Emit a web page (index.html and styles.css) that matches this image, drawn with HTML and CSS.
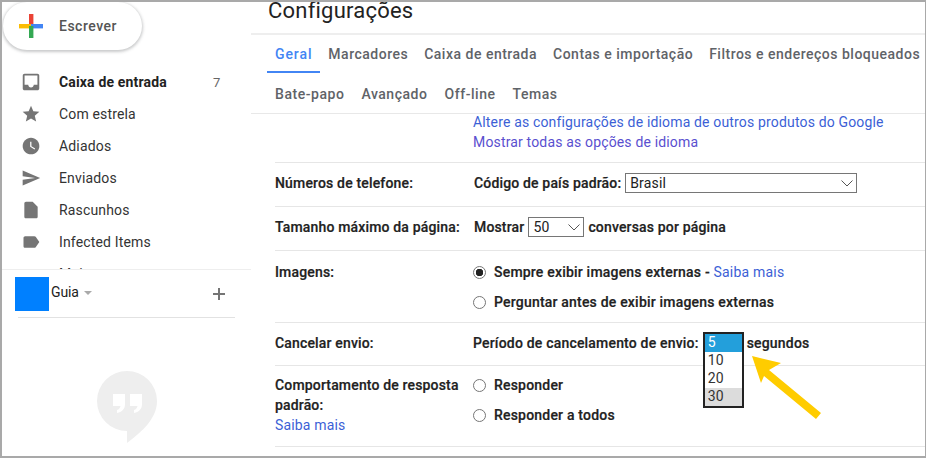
FILE: index.html
```html
<!DOCTYPE html>
<html lang="pt-BR">
<head>
<meta charset="utf-8">
<title>Configurações</title>
<link rel="stylesheet" href="styles.css">
</head>
<body>
<div class="window">
  <aside class="sidebar">
    <button class="compose">
      <svg class="compose-plus" width="24" height="24" viewBox="0 0 24 24">
        <rect x="10" y="0" width="4.4" height="12" fill="#ea4335"/>
        <rect x="12" y="10" width="12" height="4.4" fill="#4285f4"/>
        <rect x="0" y="10" width="12" height="4.4" fill="#fbbc04"/>
        <rect x="10" y="12" width="4.4" height="12" fill="#34a853"/>
      </svg>
      <span>Escrever</span>
    </button>
    <nav class="nav">
      <a class="nav-item active"><svg class="icon icon-inbox" viewBox="0 0 24 24"><path d="M19 3H4.99c-1.1 0-1.98.9-1.98 2L3 19c0 1.1.89 2 1.99 2H19c1.1 0 2-.9 2-2V5c0-1.1-.9-2-2-2zm0 12h-4c0 1.66-1.35 3-3 3s-3-1.34-3-3H4.99V5H19v10z"/></svg><span class="nav-label">Caixa de entrada</span><span class="count">7</span></a>
      <a class="nav-item"><svg class="icon" viewBox="0 0 24 24"><path d="M12 17.27L18.18 21l-1.64-7.03L22 9.24l-7.19-.61L12 2 9.19 8.63 2 9.24l5.46 4.73L5.82 21z"/></svg><span class="nav-label">Com estrela</span></a>
      <a class="nav-item"><svg class="icon" viewBox="0 0 24 24"><path d="M11.99 2C6.47 2 2 6.48 2 12s4.47 10 9.99 10C17.52 22 22 17.52 22 12S17.52 2 11.99 2z"/><path fill="#fff" d="M12.5 7H11v6l5.25 3.15.75-1.23-4.5-2.67z"/></svg><span class="nav-label">Adiados</span></a>
      <a class="nav-item"><svg class="icon" viewBox="0 0 24 24"><path d="M2.01 21L23 12 2.01 3 2 10l15 2-15 2z"/></svg><span class="nav-label">Enviados</span></a>
      <a class="nav-item"><svg class="icon" viewBox="0 0 24 24"><path d="M6 2c-1.1 0-1.99.9-1.99 2L4 20c0 1.1.89 2 1.99 2H18c1.1 0 2-.9 2-2V8l-6-6H6z"/></svg><span class="nav-label">Rascunhos</span></a>
      <a class="nav-item"><svg class="icon" viewBox="0 0 24 24"><path d="M17.63 5.84C17.27 5.33 16.67 5 16 5L5 5.01C3.9 5.01 3 5.9 3 7v10c0 1.1.9 1.99 2 1.99L16 19c.67 0 1.27-.33 1.63-.84L22 12l-4.37-6.16z"/></svg><span class="nav-label">Infected Items</span></a>
      <a class="nav-item"><span class="icon"></span><span class="nav-label">Mais</span></a>
    </nav>
    <section class="hangouts">
      <div class="hangouts-head">
        <span class="avatar"></span>
        <span class="guia">Guia</span>
        <span class="caret"></span>
        <svg class="add" width="14" height="14" viewBox="0 0 14 14"><path d="M6 1h2v5h5v2H8v5H6V8H1V6h5z"/></svg>
      </div>
      <div class="hangouts-logo">
        <svg width="60" height="72" viewBox="0 0 60 72">
          <path fill="#eeeeee" d="M30 0a30 30 0 0 1 30 30c0 17-14 30-30 42V60A30 30 0 0 1 30 0z"/>
          <path fill="#fff" d="M16 23h12v10c0 5-3 8-8 9v-3c2-.5 3-2 3.500-4H16zM33 23h12v10c0 5-3 8-8 9v-3c2-.5 3-2 3.500-4H33z"/>
        </svg>
      </div>
    </section>
  </aside>

  <main class="main">
    <h1 class="title">Configurações</h1>
    <div class="tabs">
      <div class="tab-row">
        <a class="tab selected">Geral</a>
        <a class="tab">Marcadores</a>
        <a class="tab">Caixa de entrada</a>
        <a class="tab">Contas e importação</a>
        <a class="tab">Filtros e endereços bloqueados</a>
      </div>
      <div class="tab-row second">
        <a class="tab">Bate-papo</a>
        <a class="tab">Avançado</a>
        <a class="tab">Off-line</a>
        <a class="tab">Temas</a>
      </div>
    </div>

    <div class="rows">
      <div class="row row-lang">
        <div class="label"></div>
        <div class="value links">
          <a class="link">Altere as configurações de idioma de outros produtos do Google</a>
          <a class="link visited">Mostrar todas as opções de idioma</a>
        </div>
      </div>
      <div class="row row-field">
        <div class="label">Números de telefone:</div>
        <div class="value inline field-value">
          <span>Código de país padrão:</span>
          <span class="select select-wide">Brasil<svg class="chevron" width="12" height="7" viewBox="0 0 12 7"><path d="M.5.5L6 6 11.500.5" fill="none" stroke="#555"/></svg></span>
        </div>
      </div>
      <div class="row row-field">
        <div class="label">Tamanho máximo da página:</div>
        <div class="value inline field-value">
          <span>Mostrar</span>
          <span class="select select-small">50<svg class="chevron" width="12" height="7" viewBox="0 0 12 7"><path d="M.5.5L6 6 11.500.5" fill="none" stroke="#555"/></svg></span>
          <span>conversas por página</span>
        </div>
      </div>
      <div class="row row-images">
        <div class="label">Imagens:</div>
        <div class="value options">
          <label class="option"><input type="radio" name="img" checked><span>Sempre exibir imagens externas - <a class="link">Saiba mais</a></span></label>
          <label class="option"><input type="radio" name="img"><span>Perguntar antes de exibir imagens externas</span></label>
        </div>
      </div>
      <div class="row row-undo">
        <div class="label">Cancelar envio:</div>
        <div class="value inline undo-value">
          <span>Período de cancelamento de envio:</span>
          <span class="list-slot">
            <span class="listbox">
              <span class="list-opt current">5</span>
              <span class="list-opt">10</span>
              <span class="list-opt">20</span>
              <span class="list-opt hover">30</span>
            </span>
          </span>
          <span>segundos</span>
        </div>
      </div>
      <div class="row row-reply">
        <div class="label">Comportamento de resposta padrão:<a class="link block">Saiba mais</a></div>
        <div class="value options">
          <label class="option"><input type="radio" name="reply"><span>Responder</span></label>
          <label class="option"><input type="radio" name="reply"><span>Responder a todos</span></label>
        </div>
      </div>
      <div class="row row-last">
        <div class="label">Transferência e</div>
      </div>
    </div>

    <svg class="arrow" width="76" height="66" viewBox="0 0 76 66">
      <path fill="#ffcc00" d="M1 1L30 8 18 15 70 58 65 64 13 21 10 28z"/>
    </svg>
  </main>
</div>
</body>
</html>
```
FILE: styles.css
```css
* { box-sizing: border-box; }
html, body { margin: 0; padding: 0; background: #fff; }
body { font-family: Roboto, "Liberation Sans", sans-serif; font-size: 14px; letter-spacing: .16px; color: #222; }
a { color: inherit; text-decoration: none; }

.window {
  width: 926px; height: 458px;
  border: 2px solid #a9a9a9;
  border-right-width: 1px;
  display: flex;
  overflow: hidden;
  position: relative;
  background: #fff;
}

/* sidebar */
.sidebar { width: 249px; flex: none; display: flex; flex-direction: column; }
.compose {
  width: 139px; height: 48px; margin: 0 0 0 1px;
  flex: none;
  border: 0; border-radius: 24px; background: #fff;
  box-shadow: 0 1px 3px 1px rgba(60,64,67,.28);
  display: flex; align-items: center;
  padding: 0 0 0 16px;
  font: 500 14px Roboto, sans-serif; letter-spacing: .5px; color: #555;
}
.compose-plus { margin-right: 16px; flex: none; }
.nav { height: 219px; padding-top: 16px; overflow: hidden; flex: none; }
.nav-item { display: flex; align-items: center; height: 32px; padding-left: 19px; color: #333; }
.icon { width: 20px; height: 20px; fill: #757575; margin-right: 18px; flex: none; display: block; }
.icon-inbox { width: 22px; height: 22px; margin: 0 17px 0 -1px; }
.nav-label { flex: 1; }
.active .nav-label { font-weight: 700; color: #222; }
.count { width: 38px; color: #666; font-size: 13px; }
.hangouts { flex: 1; border-top: 1px solid #eee; }
.hangouts-head {
  display: flex; align-items: center;
  height: 48px; margin: 0 16px; padding: 7px 0 7px 0;
  position: relative;
  border-bottom: 1px solid #e2e2e2;
}
.avatar { width: 34px; height: 34px; background: #0080ff; margin-left: -3px; flex: none; }
.guia { margin-left: 2px; margin-bottom: 4px; letter-spacing: -.1px; color: #222; }
.caret {
  width: 0; height: 0; margin: 0 0 2px 5px;
  border: 4px solid transparent; border-top-color: #aaa; border-bottom: 0;
}
.add { margin-left: auto; margin-right: 9px; fill: #757575; }
.hangouts-logo { display: flex; justify-content: center; padding-top: 53px; }

/* main */
.main { flex: 1; min-width: 0; display: flex; flex-direction: column; position: relative; overflow: hidden; }
.title {
  margin: 0; padding-left: 17px; height: 33px; flex: none;
  font: 400 22px/17px Roboto, sans-serif; letter-spacing: .22px; color: #222;
  border-bottom: 2px solid #eee;
}
.tabs { flex: none; border-bottom: 1px solid #e8e8e8; padding-left: 16px; height: 79px; }
.tab-row { display: flex; height: 38px; }
.tab-row.second { height: 40px; gap: 1px; }
.tab {
  padding: 0 8px; display: flex; align-items: center; flex: none; white-space: nowrap;
  font-weight: 500; font-size: 14px; letter-spacing: .5px; color: #5f6368;
  border-bottom: 2px solid transparent;
}
.tab-row:first-child .tab { padding-top: 2px; }
.tab-row.second .tab { padding-top: 3px; letter-spacing: .54px; }
.tab.selected { color: #4285f4; border-bottom-color: #4285f4; letter-spacing: .9px; }

.rows { padding-left: 24px; flex: none; }
.row { display: flex; border-bottom: 1px solid #e6e6e6; font-weight: 500; line-height: 20px; }
.label { width: 198px; flex: none; font-weight: 500; color: #222; -webkit-text-stroke: .2px #222; }
.value { flex: 1; color: #222; -webkit-text-stroke: .2px #222; }
.links { font-weight: 400; display: flex; flex-direction: column; -webkit-text-stroke: 0; }
.link { color: #3c5fd6; font-weight: 400; -webkit-text-stroke: 0; }
.link.visited { color: #5a4fcf; }
.link.block { display: block; }
.row-lang { margin-top: -2px; height: 51px; }
.row-field { height: 44px; padding-top: 10px; }
.row-images { height: 72px; padding-top: 11px; }
.row-undo { height: 43px; padding-top: 10px; }
.row-reply { height: 81px; padding-top: 9px; }
.row-last { border: 0; padding-top: 5px; margin-left: -4px; }
.inline { display: flex; align-items: center; gap: 4px; height: 20px; }
.field-value { padding-left: 1px; }
.undo-value { letter-spacing: .19px; }
.select {
  display: flex; align-items: center; justify-content: space-between;
  height: 20px; border: 1px solid #767676; background: #fff;
  padding: 0 3px 0 4px;
  font-weight: 400; -webkit-text-stroke: 0; color: #222;
}
.select-wide { width: 232px; }
.select-small { width: 56px; }
.options { display: flex; flex-direction: column; gap: 10px; letter-spacing: .2px; }
.option { display: flex; align-items: center; }
.option input {
  appearance: none; -webkit-appearance: none;
  width: 13px; height: 13px; margin: 0 8px 0 0; flex: none;
  border: 1px solid #767676; border-radius: 50%; background: #fff;
}
.option input:checked { background: radial-gradient(circle, #222 0 3.5px, #fff 4px); }
.list-slot { width: 40px; height: 20px; position: relative; flex: none; }
.listbox {
  position: absolute; left: 0; top: -1px; width: 41px;
  border: 2px solid #222; background: #fff;
  display: flex; flex-direction: column;
}
.list-opt { height: 18px; line-height: 16px; padding-left: 3px; font-weight: 400; -webkit-text-stroke: 0; color: #333; }
.list-opt.current { background: #239fdb; color: #fff; }
.list-opt.hover { background: #dcdcdc; }
.arrow { position: absolute; left: 500px; top: 353px; }
```
